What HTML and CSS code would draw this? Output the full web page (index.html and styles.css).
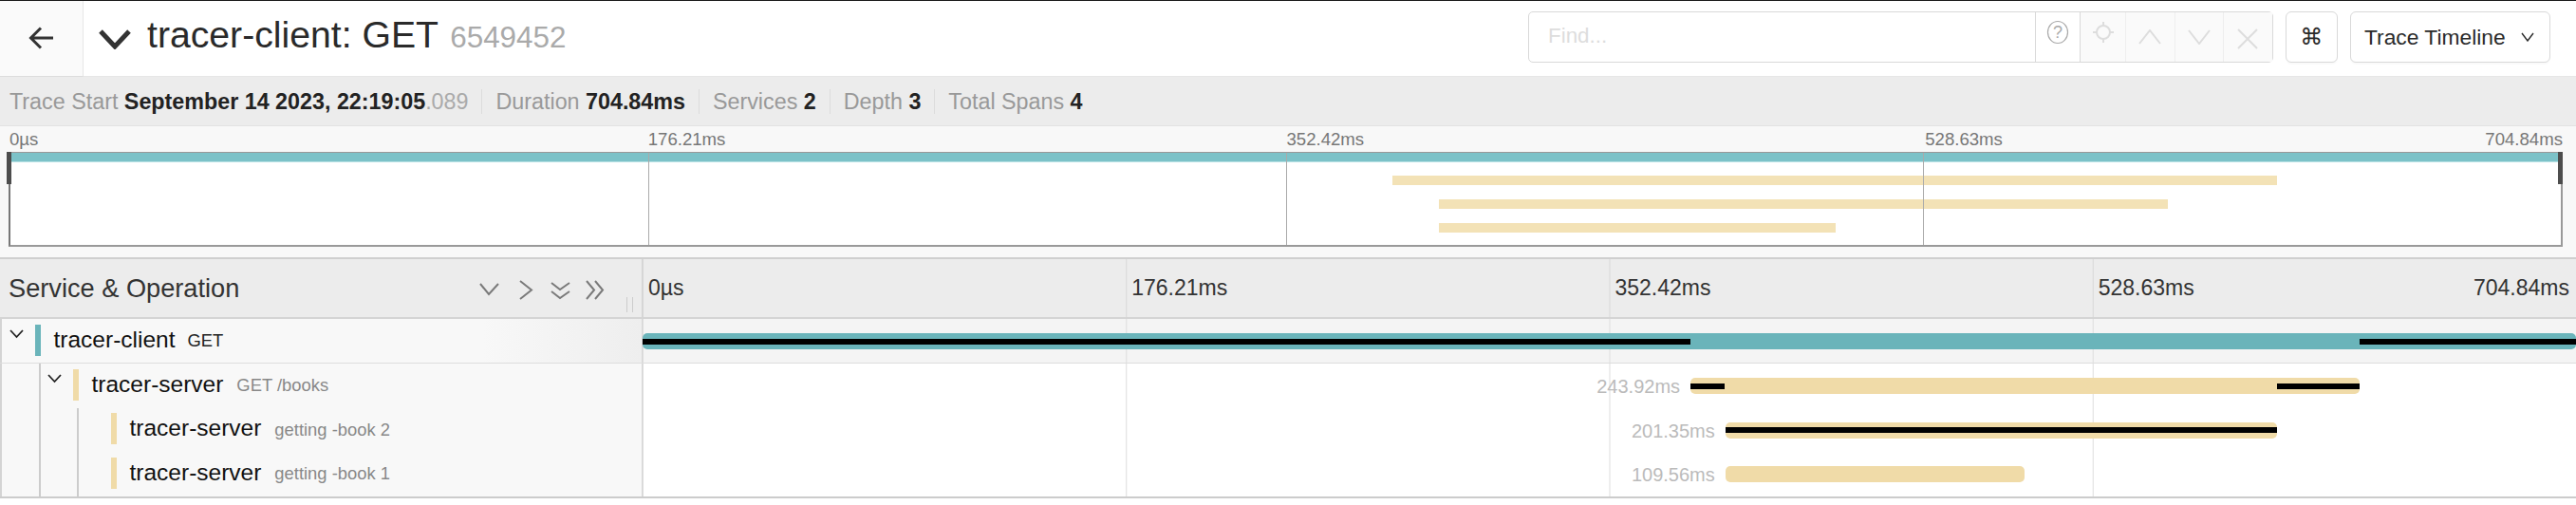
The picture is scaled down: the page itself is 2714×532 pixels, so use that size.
FILE: index.html
```html
<!DOCTYPE html>
<html lang="en">
<head>
    <meta charset="UTF-8">
    <title>tracer-client: GET 6549452</title>
    <link rel="stylesheet" href="styles.css">
</head>
<body>
    <header class="trace-header">
        <a class="back-btn">
            <svg width="28" height="26" viewBox="0 0 28 26"><path d="M26 13H3M13 2.5 2.5 13 13 23.5" class="icon-arrow"/></svg>
        </a>
        <div class="title-group">
            <svg class="title-chevron" width="36" height="22" viewBox="0 0 36 22"><path d="M3 3 18 19 33 3"/></svg>
            <h1 class="title">tracer-client: GET <small class="trace-id">6549452</small></h1>
        </div>
        <div class="tools">
            <div class="find">
                <span class="find-input">Find...</span>
                <span class="find-help">
                    <svg width="24" height="26" viewBox="0 0 24 26"><ellipse cx="12" cy="13" rx="10.5" ry="11.5"/><text x="12" y="19" text-anchor="middle">?</text></svg>
                </span>
                <span class="find-btn find-btn-first">
                    <svg width="22" height="22" viewBox="0 0 22 22"><circle cx="11" cy="11" r="7"/><path d="M11 0v5M11 17v5M0 11h4M18 11h4"/></svg>
                </span>
                <span class="find-btn">
                    <svg class="shift-down" width="24" height="16" viewBox="0 0 24 16"><path d="M1 15 12 1l11 14"/></svg>
                </span>
                <span class="find-btn">
                    <svg class="shift-down" width="24" height="16" viewBox="0 0 24 16"><path d="M1 1l11 14L23 1"/></svg>
                </span>
                <span class="find-btn">
                    <svg class="shift-down" width="22" height="22" viewBox="0 0 22 22"><path d="M1 1l20 20M21 1 1 21"/></svg>
                </span>
            </div>
            <button class="tool-btn cmd-btn">⌘</button>
            <button class="tool-btn view-btn">Trace Timeline
                <svg width="14" height="10" viewBox="0 0 14 10"><path d="M1 1l6 8 6-8"/></svg>
            </button>
        </div>
    </header>

    <ul class="meta">
        <li>Trace Start <b>September 14 2023, 22:19:05</b><span class="millis">.089</span></li>
        <li>Duration <b>704.84ms</b></li>
        <li>Services <b>2</b></li>
        <li>Depth <b>3</b></li>
        <li>Total Spans <b>4</b></li>
    </ul>

    <section class="minimap">
        <div class="mini-labels">
            <span>0µs</span><span>176.21ms</span><span>352.42ms</span><span>528.63ms</span><span class="tick-end">704.84ms</span>
        </div>
        <div class="mini-canvas">
            <div class="mini-bar mini-teal"></div>
            <div class="mini-bar mini-yellow" style="left:54.2%;width:34.66%;top:24px"></div>
            <div class="mini-bar mini-yellow" style="left:56%;width:28.6%;top:49px"></div>
            <div class="mini-bar mini-yellow" style="left:56%;width:15.58%;top:73.5px"></div>
            <i class="mini-tick" style="left:25%"></i>
            <i class="mini-tick" style="left:50%"></i>
            <i class="mini-tick" style="left:75%"></i>
            <i class="mini-handle mini-handle-left"></i>
            <i class="mini-handle mini-handle-right"></i>
        </div>
    </section>

    <section class="timeline">
        <div class="tl-head">
            <div class="tl-name-head">
                <span class="tl-heading">Service &amp; Operation</span>
                <svg class="collapse-icons" width="132" height="24" viewBox="0 0 132 24">
                    <path d="M1 6l9 11 10-11"/>
                    <path d="M43 3l12 9.500-12 9.500"/>
                    <path d="M76 5l9 7 10-7M76 14l9 7 10-7"/>
                    <path d="M113 3l8 9.500-8 9.500M122 3l8 9.500-8 9.500"/>
                </svg>
                <i class="resizer"></i>
            </div>
            <div class="tl-ticks">
                <span>0µs</span><span>176.21ms</span><span>352.42ms</span><span>528.63ms</span><span class="tick-end">704.84ms</span>
            </div>
        </div>

        <div class="span-row is-hover">
            <div class="span-name">
                <span class="toggle"><svg width="15" height="10" viewBox="0 0 15 10"><path d="M1 1l6.500 7L14 1"/></svg></span>
                <i class="span-color teal"></i>
                <span class="svc">tracer-client</span>
                <span class="op op-root">GET</span>
            </div>
            <div class="span-view">
                <div class="bar teal" style="left:0;width:100%">
                    <i class="log" style="left:0;width:54.2%"></i>
                    <i class="log" style="left:88.8%;width:11.2%"></i>
                </div>
            </div>
        </div>

        <div class="span-row">
            <div class="span-name">
                <i class="indent"></i>
                <span class="toggle"><svg width="15" height="10" viewBox="0 0 15 10"><path d="M1 1l6.500 7L14 1"/></svg></span>
                <i class="span-color sand"></i>
                <span class="svc">tracer-server</span>
                <span class="op">GET /books</span>
            </div>
            <div class="span-view">
                <span class="dur" style="right:calc(45.8% + 11px)">243.92ms</span>
                <div class="bar sand" style="left:54.2%;width:34.6%">
                    <i class="log" style="left:0;width:5.1%"></i>
                    <i class="log" style="left:87.7%;width:12.3%"></i>
                </div>
            </div>
        </div>

        <div class="span-row">
            <div class="span-name">
                <i class="indent"></i><i class="indent"></i>
                <span class="toggle"></span>
                <i class="span-color sand"></i>
                <span class="svc">tracer-server</span>
                <span class="op">getting -book 2</span>
            </div>
            <div class="span-view">
                <span class="dur" style="right:calc(44% + 11px)">201.35ms</span>
                <div class="bar sand" style="left:56%;width:28.56%">
                    <i class="log" style="left:0;width:100%"></i>
                </div>
            </div>
        </div>

        <div class="span-row">
            <div class="span-name">
                <i class="indent"></i><i class="indent"></i>
                <span class="toggle"></span>
                <i class="span-color sand"></i>
                <span class="svc">tracer-server</span>
                <span class="op">getting -book 1</span>
            </div>
            <div class="span-view">
                <span class="dur" style="right:calc(44% + 11px)">109.56ms</span>
                <div class="bar sand" style="left:56%;width:15.46%"></div>
            </div>
        </div>
    </section>
</body>
</html>
```

FILE: styles.css
```css
* {
    box-sizing: border-box;
}
body {
    font-family: "Liberation Sans", Arial, sans-serif;
    font-size: 22.4px;
    background: #ffffff;
    color: #222222;
    margin: 0;
    border-top: 1px solid #1a1a1a;
}
svg path {
    fill: none;
    stroke: currentColor;
}

/* top bar */
.trace-header {
    display: flex;
    align-items: center;
    height: 80px;
    border-bottom: 1px solid #e6e6e6;
}
.back-btn {
    display: flex;
    align-items: center;
    justify-content: center;
    width: 88px;
    height: 80px;
    background: #fafafa;
    border-right: 1px solid #e6e6e6;
    border-bottom: 1px solid #dddddd;
    color: #333333;
}
.icon-arrow {
    stroke-width: 3;
}
.title-group {
    display: flex;
    align-items: center;
    margin-left: 15px;
}
.title-chevron {
    color: #333333;
}
.title-chevron path {
    stroke-width: 5;
}
.title {
    margin: 0 0 8px 16px;
    font-size: 39.2px;
    font-weight: 400;
    color: #2a2a2a;
}
.trace-id {
    margin-left: 2px;
    font-size: 31.4px;
    color: #aaaaaa;
}
.tools {
    display: flex;
    margin-left: auto;
    margin-bottom: 3px;
    padding-right: 27.5px;
    gap: 13.5px;
}
.find {
    display: flex;
    width: 784.5px;
    height: 54px;
    border: 1px solid #d9d9d9;
    border-radius: 5px;
}
.find-input {
    flex: 1;
    padding: 12px 20px;
    color: #dddddd;
}
.find-help {
    display: flex;
    justify-content: center;
    width: 47px;
    padding-top: 8px;
    border-left: 1px solid #d9d9d9;
}
.find-help svg ellipse {
    fill: none;
    stroke: #aaaaaa;
    stroke-width: 1.2;
}
.find-help svg text {
    font-size: 18px;
    fill: #aaaaaa;
}
.find-btn {
    display: flex;
    justify-content: center;
    align-items: flex-start;
    width: 51.500px;
    padding-top: 10px;
    background: #fafafa;
    border-left: 1px solid #eeeeee;
}
.find-btn-first {
    width: 48px;
    border-left: 1px solid #d9d9d9;
}
.find-btn path,
.find-btn circle {
    fill: none;
    stroke: #dddddd;
    stroke-width: 2;
}
.shift-down {
    margin-top: 8px;
}
.find-btn:last-child .shift-down {
    margin-top: 7px;
}
.tool-btn {
    height: 54px;
    background: #ffffff;
    border: 1px solid #d9d9d9;
    border-radius: 6px;
    box-shadow: 0 2px 0 rgba(0, 0, 0, 0.02);
    font-family: inherit;
    font-size: 22.8px;
    color: #2a2a2a;
    padding: 0;
}
.cmd-btn {
    width: 54.5px;
    font-family: "DejaVu Sans", sans-serif;
    font-size: 24px;
}
.view-btn {
    display: flex;
    align-items: center;
    width: 210.5px;
    padding-left: 14px;
}
.view-btn svg {
    margin-left: 16px;
}
.view-btn path {
    stroke-width: 1.4;
}

/* trace stats */
.meta {
    display: flex;
    align-items: center;
    height: 51px;
    margin: 0;
    padding: 0 0 0 10px;
    list-style: none;
    background: #ececec;
    color: #999999;
    font-size: 23.3px;
}
.meta li {
    padding-right: 14px;
    margin-right: 14px;
    border-right: 1px solid #dcdcdc;
    line-height: 26px;
}
.meta li:last-child {
    border-right: none;
}
.meta b {
    color: #222222;
}
.millis {
    color: #aaaaaa;
}

/* minimap */
.minimap {
    height: 141px;
    padding: 0 14px 0 9px;
    background: #f8f8f8;
    border-top: 1px solid #e2e2e2;
    border-bottom: 2px solid #cfcfcf;
}
.mini-labels {
    position: relative;
    display: grid;
    grid-template-columns: repeat(4, 1fr);
    align-items: center;
    height: 27px;
    font-size: 18.6px;
    color: #777777;
}
.mini-labels span {
    padding-left: 1px;
}
.mini-labels .tick-end {
    position: absolute;
    right: 0;
    padding: 0;
}
.mini-canvas {
    position: relative;
    height: 100px;
    background: #ffffff;
    border: 2px solid #999999;
    border-left-color: #777777;
    border-top-width: 1px;
}
.mini-bar {
    position: absolute;
    height: 10px;
}
.mini-teal {
    left: 0;
    right: 0;
    top: 0;
    background: #7cc2c8;
    border-bottom: 1px solid #b9e2e5;
}
.mini-yellow {
    background: #f3e2b6;
}
.mini-tick {
    position: absolute;
    top: 0;
    bottom: 0;
    width: 1px;
    background: #aaaaaa;
}
.mini-handle {
    position: absolute;
    top: -1px;
    width: 5px;
    height: 34px;
    background: #4d4d4d;
}
.mini-handle-left {
    left: -4px;
}
.mini-handle-right {
    right: -2px;
}

/* span table */
.tl-head {
    display: flex;
    height: 63px;
    background: #ececec;
    border-bottom: 2px solid #d4d4d4;
}
.tl-name-head {
    position: relative;
    display: flex;
    align-items: center;
    width: 677px;
    padding-left: 9px;
    border-right: 1px solid #d4d4d4;
}
.tl-heading {
    font-size: 27.2px;
    color: #333333;
}
.collapse-icons {
    position: absolute;
    left: 505px;
    top: 20px;
    color: #7a7a7a;
}
.collapse-icons path {
    stroke-width: 2;
}
.resizer {
    position: absolute;
    left: 660px;
    top: 40px;
    width: 7px;
    height: 16px;
    border-left: 1px solid #cccccc;
    border-right: 1px solid #cccccc;
}
.tl-ticks {
    position: relative;
    flex: 1;
    display: grid;
    grid-template-columns: repeat(4, 1fr);
    align-items: center;
    background: linear-gradient(to right, #d8d8d8 1px, transparent 1px) 0 0 / 25% 100%;
    color: #333333;
    font-size: 23px;
}
.tl-ticks span {
    padding-left: 6px;
}
.tl-ticks .tick-end {
    position: absolute;
    right: 7px;
    padding: 0;
}
.span-row {
    display: flex;
    height: 46.5px;
}
.span-row.is-hover {
    height: 47px;
    border-bottom: 1px solid #dddddd;
}
.span-name {
    display: flex;
    align-items: center;
    width: 677px;
    padding-left: 1px;
    background: #f8f8f8;
    border-left: 2px solid #d4d4d4;
    border-right: 1px solid #d8d8d8;
}
.is-hover .span-name {
    background: linear-gradient(to right, #f8f8f8 75%, #eeeeee 100%);
}
.indent {
    align-self: stretch;
    width: 40px;
    border-right: 2px solid #cccccc;
}
.toggle {
    width: 33.500px;
    padding: 0 0 14px 7px;
    line-height: 0;
    color: #222222;
}
.toggle path {
    stroke-width: 1.8;
}
.span-color {
    width: 6px;
    height: 33px;
    margin-top: -2px;
}
.teal {
    background: #6ab4ba;
}
.sand {
    background: #f0dba8;
}
.svc {
    margin-left: 14px;
    margin-top: -3px;
    font-size: 24.500px;
    color: #111111;
}
.op {
    margin-left: 14px;
    font-size: 18.400px;
    color: #888888;
}
.op-root {
    margin-left: 13px;
    color: #222222;
}
.span-view {
    position: relative;
    flex: 1;
    background: linear-gradient(to right, #dddddd 1px, transparent 1px) 0 0 / 25% 100%, #ffffff;
}
.is-hover .span-view {
    background: linear-gradient(to right, #dddddd 1px, transparent 1px) 0 0 / 25% 100%, #f4f4f4;
}
.bar {
    position: absolute;
    top: 15px;
    height: 17px;
    border-radius: 5px;
    overflow: hidden;
}
.log {
    position: absolute;
    top: 5.500px;
    height: 6px;
    background: #000000;
}
.dur {
    position: absolute;
    top: 13px;
    font-size: 20px;
    color: #bbbbbb;
}
.timeline {
    border-bottom: 2px solid #cccccc;
}
```
